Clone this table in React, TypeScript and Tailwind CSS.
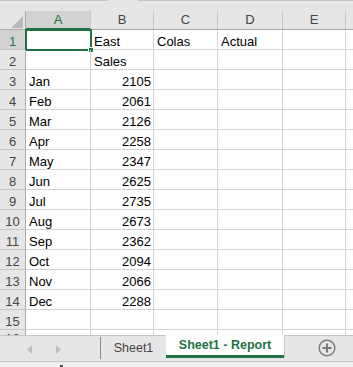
import React from "react";

const rows: [string, string, string, string][] = [
  ["", "East", "Colas", "Actual"],
  ["", "Sales", "", ""],
  ["Jan", "2105", "", ""],
  ["Feb", "2061", "", ""],
  ["Mar", "2126", "", ""],
  ["Apr", "2258", "", ""],
  ["May", "2347", "", ""],
  ["Jun", "2625", "", ""],
  ["Jul", "2735", "", ""],
  ["Aug", "2673", "", ""],
  ["Sep", "2362", "", ""],
  ["Oct", "2094", "", ""],
  ["Nov", "2066", "", ""],
  ["Dec", "2288", "", ""],
  ["", "", "", ""],
  ["", "", "", ""],
];

const font = { fontFamily: '"Liberation Sans", Arial, sans-serif' };

function Cell({
  w,
  children,
  right,
}: {
  w: string;
  children?: React.ReactNode;
  right?: boolean;
}) {
  return (
    <div
      className={`${w} shrink-0 h-[20px] border-r border-b border-[#d4d4d4] flex items-end overflow-visible whitespace-nowrap leading-[15px] text-[13px] text-black ${
        right ? "justify-end pr-[2px]" : "pl-[3px]"
      }`}
    >
      {children}
    </div>
  );
}

export default function App() {
  return (
    <div
      className="w-[353px] h-[367px] flex flex-col overflow-hidden bg-white"
      style={font}
    >
      {/* top strip */}
      <div className="h-[11px] shrink-0 bg-[#e6e6e6] flex items-start">
        <div className="h-[1px] w-[108px] bg-[#c6c6c6]" />
        <div className="h-[1px] w-[30px]" />
        <div className="h-[1px] flex-1 bg-[#c6c6c6]" />
      </div>

      {/* grid */}
      <div className="h-[324px] shrink-0 overflow-hidden flex flex-col">
        {/* header row */}
        <div className="flex h-[19px] shrink-0 bg-[#e6e6e6] border-b border-[#ababab] text-[13px] text-[#444]">
          <div className="w-[26px] shrink-0 border-r border-[#ababab] relative">
            <svg
              className="absolute left-[11px] top-[5px]"
              width="12"
              height="12"
              viewBox="0 0 12 12"
            >
              <polygon points="12,0 12,12 0,12" fill="#b9b9b9" />
            </svg>
          </div>
          <div className="w-[65px] shrink-0 bg-[#d2d2d2] border-r border-[#c6c6c6] flex items-center justify-center text-[#217346] relative">
            A
            <div className="absolute left-0 right-0 -bottom-[1px] h-[2px] bg-[#217346]" />
          </div>
          <div className="w-[63px] shrink-0 border-r border-[#c6c6c6] flex items-center justify-center">
            B
          </div>
          <div className="w-[64px] shrink-0 border-r border-[#c6c6c6] flex items-center justify-center">
            C
          </div>
          <div className="w-[65px] shrink-0 border-r border-[#c6c6c6] flex items-center justify-center">
            D
          </div>
          <div className="w-[63px] shrink-0 border-r border-[#c6c6c6] flex items-center justify-center">
            E
          </div>
          <div className="flex-1" />
        </div>

        {rows.map((r, i) => (
          <div key={i} className="flex shrink-0 relative">
            <div
              className={`w-[26px] shrink-0 h-[20px] border-r border-b border-r-[#ababab] border-b-[#c6c6c6] flex justify-center leading-[15px] text-[13px] ${
                i === 15 ? "items-start pt-[1px]" : "items-end"
              } ${
                i === 0
                  ? "bg-[#d2d2d2] text-[#217346]"
                  : "bg-[#e6e6e6] text-[#444]"
              }`}
            >
              {i + 1}
            </div>
            <Cell w="w-[65px]">{r[0]}</Cell>
            <Cell w="w-[63px]" right={/^\d+$/.test(r[1])}>
              {r[1]}
            </Cell>
            <Cell w="w-[64px]">{r[2]}</Cell>
            <Cell w="w-[65px]">{r[3]}</Cell>
            <Cell w="w-[63px]" />
            <div className="flex-1 h-[20px] border-b border-[#d4d4d4]" />
            {i === 0 && (
              <>
                <div className="absolute left-[25px] top-[-1px] w-[67px] h-[22px] border-2 border-[#217346] pointer-events-none" />
                <div className="absolute left-[88px] top-[17px] w-[6px] h-[6px] bg-[#217346] border border-white" />
              </>
            )}
          </div>
        ))}
      </div>

      {/* tab bar */}
      <div className="h-[27px] shrink-0 flex bg-[#e6e6e6] border-b border-[#c6c6c6]">
        <div className="w-[101px] shrink-0 border-t border-[#c6c6c6] flex items-center relative">
          <svg className="absolute left-[27px] top-[9px]" width="5" height="9" viewBox="0 0 5 9">
            <polygon points="5,0 5,9 0,4.5" fill="#c0c0c0" />
          </svg>
          <svg className="absolute left-[56px] top-[9px]" width="5" height="9" viewBox="0 0 5 9">
            <polygon points="0,0 0,9 5,4.5" fill="#c0c0c0" />
          </svg>
          <div className="absolute right-0 top-[1px] h-[22px] w-[1px] bg-[#8a8a8a]" />
        </div>
        <div className="w-[65px] shrink-0 border-t border-[#c6c6c6] flex items-center justify-center text-[12.5px] text-[#444]">
          Sheet1
        </div>
        <div className="w-[118px] shrink-0 bg-white flex flex-col">
          <div className="flex-1 flex items-center justify-center text-[12.5px] font-bold text-[#217346]">
            Sheet1 - Report
          </div>
          <div className="h-[3px] bg-[#217346]" />
          <div className="h-[3px] bg-[#e6e6e6]" />
        </div>
        <div className="flex-1 border-t border-l border-[#c6c6c6] h-[23px] flex items-center">
          <div className="w-[83px] flex items-center justify-center pt-[1px]">
            <svg width="18" height="18" viewBox="0 0 18 18">
              <circle cx="9" cy="9" r="7.8" fill="none" stroke="#7a7a7a" strokeWidth="1.4" />
              <line x1="9" y1="4.5" x2="9" y2="13.5" stroke="#7a7a7a" strokeWidth="2" />
              <line x1="4.5" y1="9" x2="13.5" y2="9" stroke="#7a7a7a" strokeWidth="2" />
            </svg>
          </div>
        </div>
      </div>

      {/* status strip */}
      <div className="flex-1 bg-[#f0f0f0] relative">
        <div className="absolute left-[60px] top-[3px] w-[3px] h-[2px] bg-[#555]" />
      </div>
    </div>
  );
}
